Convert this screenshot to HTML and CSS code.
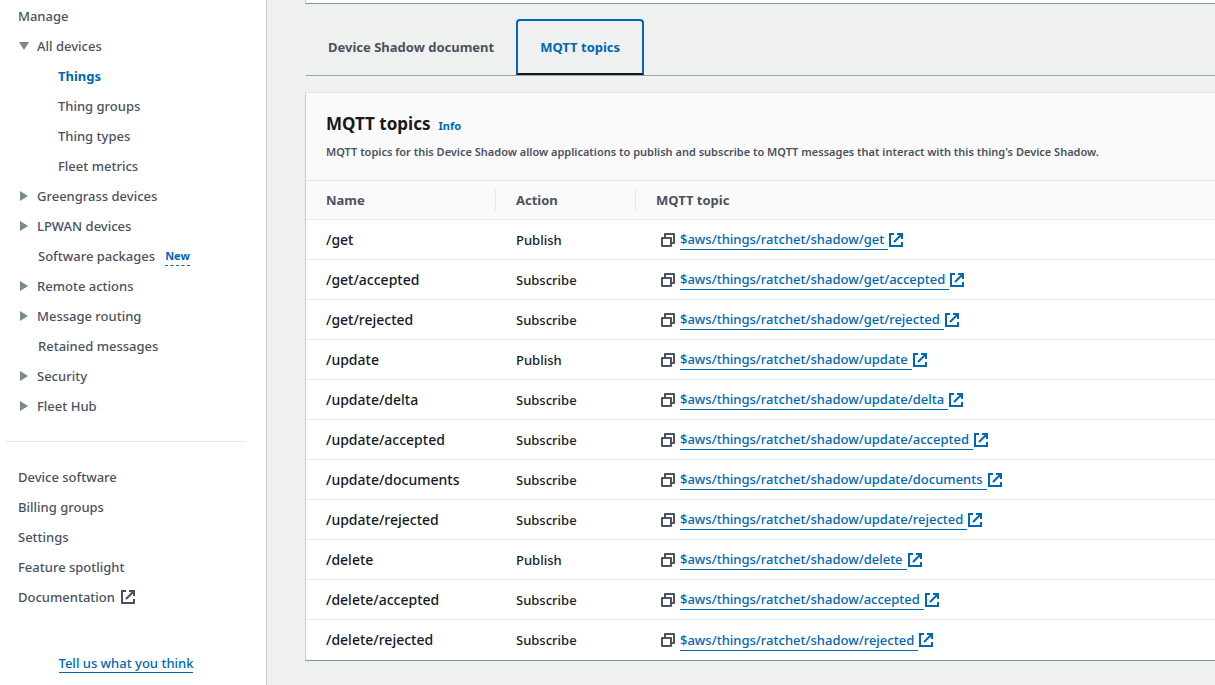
FILE: index.html
```html
<!DOCTYPE html>
<html lang="en">
<head>
<meta charset="utf-8">
<title>MQTT topics</title>
<link rel="stylesheet" href="styles.css">
</head>
<body>
<svg class="sprite" aria-hidden="true">
  <symbol id="external" viewBox="0 0 14 14"><path d="M5 1H1v12h12V9M8 1h5v5M13 1L5 9" fill="none" stroke="currentColor" stroke-width="2"/></symbol>
  <symbol id="copy" viewBox="0 0 14 14"><path d="M1 5h9v8H1zM4 5V1h9v9h-3" fill="none" stroke="currentColor" stroke-width="2" stroke-linejoin="round"/></symbol>
  <symbol id="down" viewBox="0 0 10 10"><path d="M0 1h10L5 9z" fill="currentColor"/></symbol>
  <symbol id="right" viewBox="0 0 10 10"><path d="M1 0v10l8-5z" fill="currentColor"/></symbol>
</svg>
<div class="layout">
  <aside class="sidebar">
    <nav class="nav">
      <h2 class="nav-title">Manage</h2>
      <ul class="nav-list">
        <li class="nav-item"><button class="toggle" aria-label="Collapse All devices"><svg><use href="#down"/></svg></button><a href="#">All devices</a></li>
        <li class="nav-item child"><a href="#" class="active">Things</a></li>
        <li class="nav-item child"><a href="#">Thing groups</a></li>
        <li class="nav-item child"><a href="#">Thing types</a></li>
        <li class="nav-item child"><a href="#">Fleet metrics</a></li>
        <li class="nav-item"><button class="toggle" aria-label="Expand Greengrass devices"><svg><use href="#right"/></svg></button><a href="#">Greengrass devices</a></li>
        <li class="nav-item"><button class="toggle" aria-label="Expand LPWAN devices"><svg><use href="#right"/></svg></button><a href="#">LPWAN devices</a></li>
        <li class="nav-item leaf"><a href="#">Software packages</a><button class="new">New</button></li>
        <li class="nav-item"><button class="toggle" aria-label="Expand Remote actions"><svg><use href="#right"/></svg></button><a href="#">Remote actions</a></li>
        <li class="nav-item"><button class="toggle" aria-label="Expand Message routing"><svg><use href="#right"/></svg></button><a href="#">Message routing</a></li>
        <li class="nav-item leaf"><a href="#">Retained messages</a></li>
        <li class="nav-item"><button class="toggle" aria-label="Expand Security"><svg><use href="#right"/></svg></button><a href="#">Security</a></li>
        <li class="nav-item"><button class="toggle" aria-label="Expand Fleet Hub"><svg><use href="#right"/></svg></button><a href="#">Fleet Hub</a></li>
      </ul>
      <hr class="rule">
      <ul class="nav-list">
        <li class="nav-item"><a href="#">Device software</a></li>
        <li class="nav-item"><a href="#">Billing groups</a></li>
        <li class="nav-item"><a href="#">Settings</a></li>
        <li class="nav-item"><a href="#">Feature spotlight</a></li>
        <li class="nav-item"><a href="#" class="with-icon">Documentation<svg class="icon"><use href="#external"/></svg></a></li>
      </ul>
      <div class="feedback"><a href="#">Tell us what you think</a></div>
    </nav>
  </aside>
  <main class="content">
    <div class="card-end"></div>
    <div class="tabs" role="tablist">
      <button class="tab" role="tab" aria-selected="false">Device Shadow document</button>
      <button class="tab selected" role="tab" aria-selected="true">MQTT topics</button>
    </div>
    <section class="card">
      <header class="card-header">
        <div class="heading"><h1>MQTT topics</h1><a href="#">Info</a></div>
        <p>MQTT topics for this Device Shadow allow applications to publish and subscribe to MQTT messages that interact with this thing's Device Shadow.</p>
      </header>
      <table class="topics">
        <colgroup><col class="col-name"><col class="col-action"><col></colgroup>
        <thead><tr><th scope="col"><div>Name</div></th><th scope="col"><div>Action</div></th><th scope="col"><div>MQTT topic</div></th></tr></thead>
        <tbody>
          <tr><td class="name">/get</td><td>Publish</td><td><div class="topic"><button class="copy" aria-label="Copy topic"><svg class="icon"><use href="#copy"/></svg></button><a href="#"><span>$aws/things/ratchet/shadow/get</span><svg class="icon"><use href="#external"/></svg></a></div></td></tr>
          <tr><td class="name">/get/accepted</td><td>Subscribe</td><td><div class="topic"><button class="copy" aria-label="Copy topic"><svg class="icon"><use href="#copy"/></svg></button><a href="#"><span>$aws/things/ratchet/shadow/get/accepted</span><svg class="icon"><use href="#external"/></svg></a></div></td></tr>
          <tr><td class="name">/get/rejected</td><td>Subscribe</td><td><div class="topic"><button class="copy" aria-label="Copy topic"><svg class="icon"><use href="#copy"/></svg></button><a href="#"><span>$aws/things/ratchet/shadow/get/rejected</span><svg class="icon"><use href="#external"/></svg></a></div></td></tr>
          <tr><td class="name">/update</td><td>Publish</td><td><div class="topic"><button class="copy" aria-label="Copy topic"><svg class="icon"><use href="#copy"/></svg></button><a href="#"><span>$aws/things/ratchet/shadow/update</span><svg class="icon"><use href="#external"/></svg></a></div></td></tr>
          <tr><td class="name">/update/delta</td><td>Subscribe</td><td><div class="topic"><button class="copy" aria-label="Copy topic"><svg class="icon"><use href="#copy"/></svg></button><a href="#"><span>$aws/things/ratchet/shadow/update/delta</span><svg class="icon"><use href="#external"/></svg></a></div></td></tr>
          <tr><td class="name">/update/accepted</td><td>Subscribe</td><td><div class="topic"><button class="copy" aria-label="Copy topic"><svg class="icon"><use href="#copy"/></svg></button><a href="#"><span>$aws/things/ratchet/shadow/update/accepted</span><svg class="icon"><use href="#external"/></svg></a></div></td></tr>
          <tr><td class="name">/update/documents</td><td>Subscribe</td><td><div class="topic"><button class="copy" aria-label="Copy topic"><svg class="icon"><use href="#copy"/></svg></button><a href="#"><span>$aws/things/ratchet/shadow/update/documents</span><svg class="icon"><use href="#external"/></svg></a></div></td></tr>
          <tr><td class="name">/update/rejected</td><td>Subscribe</td><td><div class="topic"><button class="copy" aria-label="Copy topic"><svg class="icon"><use href="#copy"/></svg></button><a href="#"><span>$aws/things/ratchet/shadow/update/rejected</span><svg class="icon"><use href="#external"/></svg></a></div></td></tr>
          <tr><td class="name">/delete</td><td>Publish</td><td><div class="topic"><button class="copy" aria-label="Copy topic"><svg class="icon"><use href="#copy"/></svg></button><a href="#"><span>$aws/things/ratchet/shadow/delete</span><svg class="icon"><use href="#external"/></svg></a></div></td></tr>
          <tr><td class="name">/delete/accepted</td><td>Subscribe</td><td><div class="topic"><button class="copy" aria-label="Copy topic"><svg class="icon"><use href="#copy"/></svg></button><a href="#"><span>$aws/things/ratchet/shadow/accepted</span><svg class="icon"><use href="#external"/></svg></a></div></td></tr>
          <tr><td class="name">/delete/rejected</td><td>Subscribe</td><td><div class="topic"><button class="copy" aria-label="Copy topic"><svg class="icon"><use href="#copy"/></svg></button><a href="#"><span>$aws/things/ratchet/shadow/rejected</span><svg class="icon"><use href="#external"/></svg></a></div></td></tr>
        </tbody>
      </table>
    </section>
  </main>
</div>
</body>
</html>
```
FILE: styles.css
```css
* { box-sizing: border-box; }
body { margin: 0; background: #eff1f1; color: #16191f; font-family: "Noto Sans", sans-serif; font-size: 13px; font-weight: 500; line-height: 20px; }
a { color: #0067b4; text-decoration: none; }
button { border: 0; padding: 0; background: none; font: inherit; color: inherit; cursor: pointer; }
svg { display: block; flex: none; }
.sprite { display: none; }
.icon { width: 14px; height: 14px; }
.layout { display: flex; min-height: 100vh; }

.sidebar { flex: none; width: 267px; background: #fff; border-right: 1px solid #c9cccc; color: #4b525e; }
.nav { padding-top: 1px; }
.nav-title { margin: 0; padding-left: 18px; font-size: 13px; font-weight: 500; line-height: 30px; }
.nav-list { margin: 0; padding: 0 18px; list-style: none; }
.nav-item { display: flex; align-items: center; height: 30px; }
.nav-item a { color: inherit; }
.nav-item .active { color: #0067b4; font-weight: 700; }
.child { padding-left: 40px; }
.leaf { padding-left: 20px; gap: 10px; }
.toggle { width: 19px; color: #7b8a8b; }
.toggle svg { width: 12px; height: 10px; }
.new { border-bottom: 1px dashed #0067b4; color: #0067b4; font-size: 11px; font-weight: 700; line-height: 18px; }
.rule { height: 1px; margin: 20px 20px 20px 6px; border: 0; background: #e6e9e9; }
.with-icon { display: flex; align-items: center; gap: 6px; }
.feedback { padding-top: 41px; padding-right: 14px; text-align: center; }
.feedback a { display: inline-block; border-bottom: 1px solid #0067b4; line-height: 18px; }

.content { flex: 1; min-width: 0; padding-left: 38px; }
.card-end { height: 4px; background: #fff; border: 1px solid #c9cecf; border-width: 0 0 1px 1px; border-bottom-color: #879596; }
.tabs { display: flex; align-items: flex-end; margin-left: 1px; padding-top: 15px; border-bottom: 1px solid #9aa6a8; }
.tab { height: 56px; padding: 0 20px; border: 2px solid transparent; color: #4b525e; font-weight: 700; }
.tab.selected { padding: 0 22px; border-color: #0067b4; border-bottom-color: #16191f; border-radius: 4px 4px 0 0; color: #0067b4; }
.card { margin-top: 16px; border: 1px solid #c9cecf; border-top-color: #e4e8e8; border-right: 0; border-bottom-color: #879596; background: #fff; }
.card-header { padding: 19px 20px; background: #fafafa; }
.heading { display: flex; align-items: baseline; gap: 8px; }
.heading h1 { margin: 0; font-size: 17px; line-height: 24px; }
.heading a { font-size: 11px; font-weight: 700; }
.card-header p { margin: 7px 0 0; color: #4b525e; font-size: 11px; font-weight: 600; line-height: 18px; }
.topics { width: 100%; border-collapse: separate; border-spacing: 0; table-layout: fixed; }
.col-name { width: 190px; }
.col-action { width: 140px; }
th { height: 40px; padding: 0; border: 1px solid #e6e9e9; border-width: 1px 0; background: #fafafa; color: #4b525e; text-align: left; }
th div { padding-left: 20px; border-right: 1px solid #e6e9e9; }
th:last-child div { border-right: 0; }
td { height: 40px; padding: 0 0 0 20px; border-bottom: 1px solid #e6e9e9; white-space: nowrap; }
tr:last-child td { border-bottom: 0; }
.name { font-size: 14px; }
.topic { display: flex; align-items: center; gap: 5px; padding-left: 5px; }
.copy { color: #4b525e; }
.topic a { display: flex; align-items: center; gap: 1px; font-weight: 550; }
.topic span { padding-right: 4px; border-bottom: 1px solid #0067b4; }
```
